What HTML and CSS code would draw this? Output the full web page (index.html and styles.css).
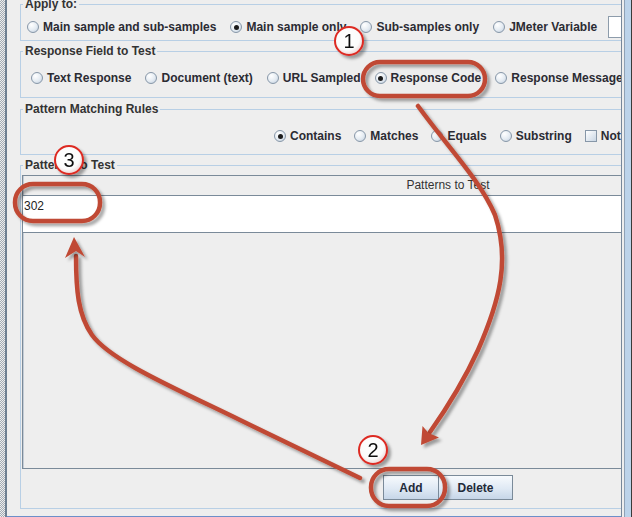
FILE: index.html
```html
<!DOCTYPE html>
<html>
<head>
  <title>Response Assertion</title>
  <link rel="stylesheet" href="styles.css">
</head>
<body>
  <div class="gutter"></div>
  <div class="main">
    <fieldset class="group first">
      <legend>Apply to:</legend>
      <div class="row row-apply">
        <label class="opt"><span class="radio"></span>Main sample and sub-samples</label>
        <label class="opt"><span class="radio on"></span>Main sample only</label>
        <label class="opt"><span class="radio"></span>Sub-samples only</label>
        <label class="opt"><span class="radio"></span>JMeter Variable</label>
        <span class="textfield"></span>
      </div>
    </fieldset>

    <fieldset class="group">
      <legend>Response Field to Test</legend>
      <div class="row row-field">
        <label class="opt"><span class="radio"></span>Text Response</label>
        <label class="opt"><span class="radio"></span>Document (text)</label>
        <label class="opt"><span class="radio"></span>URL Sampled</label>
        <label class="opt"><span class="radio on"></span>Response Code</label>
        <label class="opt"><span class="radio"></span>Response Message</label>
      </div>
    </fieldset>

    <fieldset class="group rules">
      <legend>Pattern Matching Rules</legend>
      <div class="row row-rules">
        <label class="opt"><span class="radio on"></span>Contains</label>
        <label class="opt"><span class="radio"></span>Matches</label>
        <label class="opt"><span class="radio"></span>Equals</label>
        <label class="opt"><span class="radio"></span>Substring</label>
        <label class="opt"><span class="check"></span>Not</label>
      </div>
    </fieldset>

    <fieldset class="group patterns">
      <legend>Patterns to Test</legend>
      <div class="scrollpane">
        <div class="table-header">Patterns to Test</div>
        <div class="table-rows">
          <div class="cell">302</div>
        </div>
      </div>
      <div class="buttons">
        <button class="btn">Add</button>
        <button class="btn wide">Delete</button>
      </div>
    </fieldset>
  </div>
  <div class="vscroll"></div>

  <!-- annotation layer drawn over the form -->
  <svg class="notes" width="632" height="517" viewBox="0 0 632 517">
    <defs>
      <filter id="shadow" x="-30%" y="-30%" width="160%" height="160%">
        <feDropShadow dx="3" dy="3" stdDeviation="1.8" flood-color="#000" flood-opacity="0.35"/>
      </filter>
      <radialGradient id="badgeFill" cx="45%" cy="40%" r="60%">
        <stop offset="0" stop-color="#ffffff"/>
        <stop offset="0.7" stop-color="#fbfbfb"/>
        <stop offset="1" stop-color="#ecd4d4"/>
      </radialGradient>
    </defs>

    <g filter="url(#shadow)" fill="none" stroke="#c04a34" stroke-width="4.5" stroke-linecap="round">
      <rect x="363" y="62" width="122" height="34" rx="17"/>
      <rect x="371" y="469" width="74" height="37" rx="18"/>
      <rect x="15" y="184" width="85" height="37" rx="18"/>
      <path d="M418,106 C450,150 480,180 495,215 C510,260 500,300 478,350 C462,385 442,415 430,432"/>
      <path d="M360,478 L240,420 C170,386 110,360 92,335 C78,315 76,290 76,256"/>
    </g>
    <g filter="url(#shadow)" fill="#c04a34">
      <polygon points="421,445 422.5,426 428.5,433 439,437.5"/>
      <polygon points="74,237 85,257 76,251 65,258"/>
    </g>

    <g class="badge" filter="url(#shadow)">
      <circle cx="349" cy="41" r="14" fill="url(#badgeFill)" stroke="#dd2a22" stroke-width="2"/>
      <text x="349" y="48">1</text>
      <circle cx="373" cy="450" r="14" fill="url(#badgeFill)" stroke="#dd2a22" stroke-width="2"/>
      <text x="373" y="457">2</text>
      <circle cx="69" cy="160" r="14" fill="url(#badgeFill)" stroke="#dd2a22" stroke-width="2"/>
      <text x="69" y="167">3</text>
    </g>
  </svg>
</body>
</html>
```

FILE: styles.css
```css
body {
  margin: 0;
  width: 632px;
  height: 517px;
  overflow: hidden;
  display: flex;
  position: relative;
  background: #eeeeee;
  font: bold 12px "Liberation Sans", Arial, sans-serif;
  color: #2b2b33;
}
.gutter {
  width: 7px;
  flex: none;
  background: linear-gradient(to right, transparent 5px, #6f8092 5px),
    repeating-conic-gradient(#a3acb5 0 25%, #eeeeee 0 50%) 0 0 / 2px 2px;
}
.main {
  flex: 1;
  height: 516px;
  overflow: hidden;
  border-bottom: 1px solid #6d8fc9;
}
.vscroll {
  width: 11px;
  flex: none;
  background: linear-gradient(to right, #76879a 0 1px, #eeeeee 1px 3px, #8fa1b5 3px 4px, #bcd3ea 4px 10px, #3a3a3a 10px);
}

/* titled borders */
.group {
  width: 856px;
  box-sizing: border-box;
  min-width: 0;
  margin: 3px 0 0 13px;
  padding: 0;
  border: 1px solid #b8cfe5;
}
.group.first { margin-top: -3px; }
.group.rules { margin-top: 4px; }
legend {
  margin-left: 2px;
  padding: 0 2px;
  line-height: 14px;
  color: #333;
}

.row {
  display: flex;
  align-items: center;
  gap: 14px;
  height: 20px;
  white-space: nowrap;
}
.row-apply { margin: 6px 0 3px; padding-left: 6px; }
.row-field { margin: 10px 0 9px; padding-left: 10px; }
.row-rules { margin: 10px 0 8px; padding-left: 253px; gap: 13px; }

.opt {
  display: flex;
  align-items: center;
  gap: 4px;
}
.radio {
  position: relative;
  flex: none;
  width: 12px;
  height: 12px;
  box-sizing: border-box;
  border-radius: 50%;
  border: 1px solid #8797a8;
  background: radial-gradient(circle at 35% 30%, #ffffff, #e4ebf2 55%, #bccadb);
}
.radio.on::after {
  content: "";
  position: absolute;
  left: 2.5px;
  top: 2.5px;
  width: 5px;
  height: 5px;
  border-radius: 50%;
  background: #1c1c1c;
}
.check {
  flex: none;
  width: 12px;
  height: 12px;
  box-sizing: border-box;
  border: 1px solid #8797a8;
  background: linear-gradient(135deg, #ffffff, #c9d6e4);
}
.textfield {
  flex: none;
  width: 60px;
  height: 22px;
  box-sizing: border-box;
  margin-left: -3px;
  background: #fff;
  border: 1px solid #8d9cab;
}

/* patterns table */
.scrollpane {
  margin: 3px 1px 0;
  height: 294px;
  box-sizing: border-box;
  border: 1px solid #7a8a99;
  box-shadow: inset 1px 0 #c3ccd6;
}
.table-header {
  height: 20px;
  box-sizing: border-box;
  border-bottom: 1px solid #7a8a99;
  text-align: center;
  line-height: 19px;
  font-weight: normal;
  color: #333;
}
.table-rows {
  height: 37px;
  box-sizing: border-box;
  background: #fff;
  border-bottom: 1px solid #7a8a99;
}
.cell {
  line-height: 20px;
  padding-left: 1px;
  font-weight: normal;
  color: #222;
}

.buttons {
  display: flex;
  justify-content: center;
  margin: 6px 0 8px;
}
.btn {
  width: 56px;
  height: 25px;
  padding: 0;
  font: bold 12px "Liberation Sans", Arial, sans-serif;
  color: #1f2b3a;
  border: 1px solid #7a8a99;
  background: linear-gradient(#f7fafd, #dfe9f4 55%, #c6d6e8);
}
.btn.wide { width: 75px; margin-left: -1px; }

.notes {
  position: absolute;
  left: 0;
  top: 0;
  pointer-events: none;
}
.badge text {
  font: 20px "Liberation Sans", Arial, sans-serif;
  fill: #111;
  text-anchor: middle;
}
```
